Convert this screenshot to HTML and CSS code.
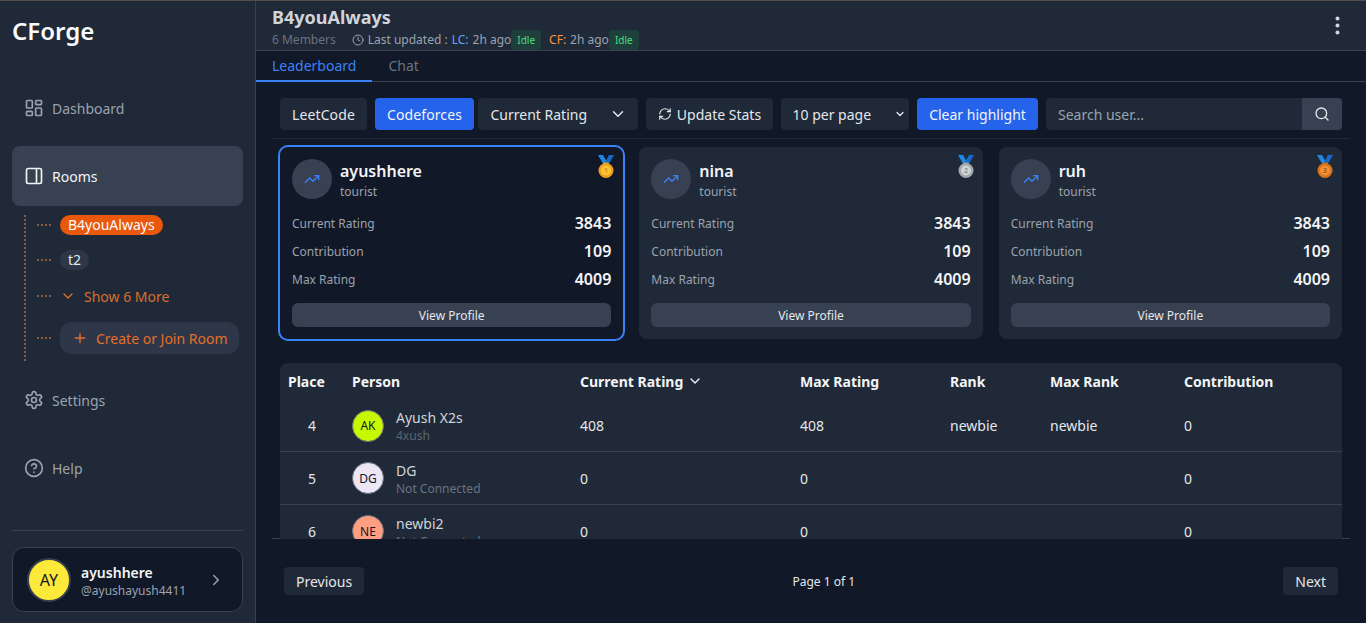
FILE: index.html
```html
<!DOCTYPE html>
<html lang="en">
<head>
<meta charset="utf-8">
<title>CForge</title>
<link rel="stylesheet" href="styles.css">
</head>
<body>
<div class="app">
  <aside class="sidebar">
    <h1 class="logo">CForge</h1>
    <nav class="nav">
      <a class="nav-item">
        <svg class="nav-icon" viewBox="0 0 24 24" fill="none" stroke="currentColor" stroke-width="2" stroke-linejoin="round"><rect x="3" y="3" width="7" height="9" rx="1"/><rect x="14" y="3" width="7" height="5" rx="1"/><rect x="14" y="12" width="7" height="9" rx="1"/><rect x="3" y="16" width="7" height="5" rx="1"/></svg>
        <span>Dashboard</span>
      </a>
      <a class="nav-item active">
        <svg class="nav-icon" viewBox="0 0 24 24" fill="none" stroke="currentColor" stroke-width="2" stroke-linejoin="round"><rect x="3" y="3" width="18" height="18" rx="2"/><path d="M15 3v18"/></svg>
        <span>Rooms</span>
      </a>
      <ul class="tree">
        <li class="tree-row"><i class="dash"></i><span class="pill pill-on">B4youAlways</span></li>
        <li class="tree-row"><i class="dash"></i><span class="pill">t2</span></li>
        <li class="tree-row"><i class="dash"></i><span class="more"><svg class="more-icon" viewBox="0 0 24 24" fill="none" stroke="currentColor" stroke-width="2" stroke-linecap="round" stroke-linejoin="round"><path d="m6 9 6 6 6-6"/></svg>Show 6 More</span></li>
        <li class="tree-row"><i class="dash"></i><span class="create"><svg class="create-icon" viewBox="0 0 24 24" fill="none" stroke="currentColor" stroke-width="2" stroke-linecap="round"><path d="M5 12h14M12 5v14"/></svg>Create or Join Room</span></li>
      </ul>
      <a class="nav-item">
        <svg class="nav-icon" viewBox="0 0 24 24" fill="none" stroke="currentColor" stroke-width="2" stroke-linecap="round" stroke-linejoin="round"><path d="M12.22 2h-.44a2 2 0 0 0-2 2v.18a2 2 0 0 1-1 1.73l-.43.25a2 2 0 0 1-2 0l-.15-.08a2 2 0 0 0-2.73.73l-.22.38a2 2 0 0 0 .73 2.73l.15.1a2 2 0 0 1 1 1.72v.51a2 2 0 0 1-1 1.74l-.15.09a2 2 0 0 0-.73 2.73l.22.38a2 2 0 0 0 2.73.73l.15-.08a2 2 0 0 1 2 0l.43.25a2 2 0 0 1 1 1.73V20a2 2 0 0 0 2 2h.44a2 2 0 0 0 2-2v-.18a2 2 0 0 1 1-1.73l.43-.25a2 2 0 0 1 2 0l.15.08a2 2 0 0 0 2.73-.73l.22-.39a2 2 0 0 0-.73-2.73l-.15-.08a2 2 0 0 1-1-1.74v-.5a2 2 0 0 1 1-1.74l.15-.09a2 2 0 0 0 .73-2.73l-.22-.38a2 2 0 0 0-2.73-.73l-.15.08a2 2 0 0 1-2 0l-.43-.25a2 2 0 0 1-1-1.73V4a2 2 0 0 0-2-2z"/><circle cx="12" cy="12" r="3"/></svg>
        <span>Settings</span>
      </a>
      <a class="nav-item">
        <svg class="nav-icon" viewBox="0 0 24 24" fill="none" stroke="currentColor" stroke-width="2" stroke-linecap="round" stroke-linejoin="round"><circle cx="12" cy="12" r="10"/><path d="M9.09 9a3 3 0 0 1 5.83 1c0 2-3 3-3 3"/><path d="M12 17h.01"/></svg>
        <span>Help</span>
      </a>
    </nav>
    <div class="side-foot">
      <div class="user-card">
        <span class="user-avatar">AY</span>
        <span class="user-text"><strong>ayushhere</strong><small>@ayushayush4411</small></span>
        <svg class="user-chev" viewBox="0 0 24 24" fill="none" stroke="currentColor" stroke-width="2" stroke-linecap="round" stroke-linejoin="round"><path d="m9 18 6-6-6-6"/></svg>
      </div>
    </div>
  </aside>

  <main class="main">
    <header class="room-head">
      <div class="room-info">
        <h2 class="room-title">B4youAlways</h2>
        <div class="room-meta">
          <span class="members">6 Members</span>
          <svg class="clock" viewBox="0 0 24 24" fill="none" stroke="currentColor" stroke-width="2" stroke-linecap="round" stroke-linejoin="round"><circle cx="12" cy="12" r="10"/><path d="M12 6v6l4 2"/></svg>
          <span>Last updated :</span>
          <span class="lc">LC:</span>
          <span>2h ago</span><span class="idle">Idle</span>
          <span class="cf">CF:</span>
          <span>2h ago</span><span class="idle">Idle</span>
        </div>
      </div>
      <svg class="kebab" viewBox="0 0 24 24" fill="currentColor"><circle cx="12" cy="4" r="2.3"/><circle cx="12" cy="12" r="2.3"/><circle cx="12" cy="20" r="2.3"/></svg>
    </header>

    <div class="tabs">
      <span class="tab tab-on">Leaderboard</span>
      <span class="tab">Chat</span>
    </div>

    <div class="panel">
      <div class="scroller">
        <div class="toolbar">
          <button class="btn btn-lc">LeetCode</button>
          <button class="btn btn-blue btn-cf">Codeforces</button>
          <span class="select sel-rating">Current Rating<svg class="sel-chev" viewBox="0 0 24 24" fill="none" stroke="currentColor" stroke-width="2" stroke-linecap="round" stroke-linejoin="round"><path d="m6 9 6 6 6-6"/></svg></span>
          <button class="btn btn-update"><svg class="refresh" viewBox="0 0 24 24" fill="none" stroke="currentColor" stroke-width="2" stroke-linecap="round" stroke-linejoin="round"><path d="M3 12a9 9 0 0 1 9-9 9.75 9.75 0 0 1 6.74 2.74L21 8"/><path d="M21 3v5h-5"/><path d="M21 12a9 9 0 0 1-9 9 9.75 9.75 0 0 1-6.74-2.74L3 16"/><path d="M8 16H3v5"/></svg>Update Stats</button>
          <span class="select sel-page">10 per page<svg class="sel-chev small" viewBox="0 0 24 24" fill="none" stroke="currentColor" stroke-width="2.6" stroke-linecap="round" stroke-linejoin="round"><path d="m6 9 6 6 6-6"/></svg></span>
          <button class="btn btn-blue btn-clear">Clear highlight</button>
          <div class="search">
            <span class="search-input">Search user...</span>
            <span class="search-btn"><svg viewBox="0 0 24 24" fill="none" stroke="currentColor" stroke-width="2" stroke-linecap="round" stroke-linejoin="round"><circle cx="11" cy="11" r="8"/><path d="m21 21-4.3-4.3"/></svg></span>
          </div>
        </div>

        <section class="cards">
          <article class="card card-on">
            <svg class="medal" viewBox="0 0 16 23"><path d="M0 0h5l5 9-4 1.500z" fill="#1e88e5"/><path d="M16 0h-5L6 9l4 1.500z" fill="#1669c7"/><rect x="5.500" y="7.500" width="5" height="2.500" fill="#e9a11a"/><circle cx="8" cy="15.500" r="7.500" fill="#f0a01c"/><circle cx="8" cy="15.500" r="5" fill="#fcc634"/><text class="medal-num num-gold" x="8" y="18">1</text></svg>
            <div class="card-head">
              <span class="trend"><svg viewBox="0 0 24 24" fill="none" stroke="currentColor" stroke-width="2" stroke-linecap="round" stroke-linejoin="round"><path d="m22 7-8.500 8.500-5-5L2 17"/><path d="M16 7h6v6"/></svg></span>
              <span class="card-name"><strong>ayushhere</strong><small>tourist</small></span>
            </div>
            <dl class="stats">
              <div class="stat"><dt>Current Rating</dt><dd>3843</dd></div>
              <div class="stat"><dt>Contribution</dt><dd>109</dd></div>
              <div class="stat"><dt>Max Rating</dt><dd>4009</dd></div>
            </dl>
            <button class="view">View Profile</button>
          </article>
          <article class="card">
            <svg class="medal" viewBox="0 0 16 23"><path d="M0 0h5l5 9-4 1.500z" fill="#1e88e5"/><path d="M16 0h-5L6 9l4 1.500z" fill="#1669c7"/><rect x="5.500" y="7.500" width="5" height="2.500" fill="#9aa0a6"/><circle cx="8" cy="15.500" r="7.500" fill="#a3a8ad"/><circle cx="8" cy="15.500" r="5" fill="#cfd3d6"/><text class="medal-num num-silver" x="8" y="18">2</text></svg>
            <div class="card-head">
              <span class="trend"><svg viewBox="0 0 24 24" fill="none" stroke="currentColor" stroke-width="2" stroke-linecap="round" stroke-linejoin="round"><path d="m22 7-8.500 8.500-5-5L2 17"/><path d="M16 7h6v6"/></svg></span>
              <span class="card-name"><strong>nina</strong><small>tourist</small></span>
            </div>
            <dl class="stats">
              <div class="stat"><dt>Current Rating</dt><dd>3843</dd></div>
              <div class="stat"><dt>Contribution</dt><dd>109</dd></div>
              <div class="stat"><dt>Max Rating</dt><dd>4009</dd></div>
            </dl>
            <button class="view">View Profile</button>
          </article>
          <article class="card">
            <svg class="medal" viewBox="0 0 16 23"><path d="M0 0h5l5 9-4 1.500z" fill="#1e88e5"/><path d="M16 0h-5L6 9l4 1.500z" fill="#1669c7"/><rect x="5.500" y="7.500" width="5" height="2.500" fill="#c46a1a"/><circle cx="8" cy="15.500" r="7.500" fill="#d9731c"/><circle cx="8" cy="15.500" r="5" fill="#f0913a"/><text class="medal-num num-bronze" x="8" y="18">3</text></svg>
            <div class="card-head">
              <span class="trend"><svg viewBox="0 0 24 24" fill="none" stroke="currentColor" stroke-width="2" stroke-linecap="round" stroke-linejoin="round"><path d="m22 7-8.500 8.500-5-5L2 17"/><path d="M16 7h6v6"/></svg></span>
              <span class="card-name"><strong>ruh</strong><small>tourist</small></span>
            </div>
            <dl class="stats">
              <div class="stat"><dt>Current Rating</dt><dd>3843</dd></div>
              <div class="stat"><dt>Contribution</dt><dd>109</dd></div>
              <div class="stat"><dt>Max Rating</dt><dd>4009</dd></div>
            </dl>
            <button class="view">View Profile</button>
          </article>
        </section>

        <table class="board">
          <colgroup><col class="c-place"><col class="c-person"><col class="c-cur"><col class="c-max"><col class="c-rank"><col class="c-maxrank"><col class="c-contrib"></colgroup>
          <thead>
            <tr><th>Place</th><th>Person</th><th>Current Rating<svg class="th-chev" viewBox="0 0 24 24" fill="none" stroke="currentColor" stroke-width="2" stroke-linecap="round" stroke-linejoin="round"><path d="m6 9 6 6 6-6"/></svg></th><th>Max Rating</th><th>Rank</th><th>Max Rank</th><th>Contribution</th></tr>
          </thead>
          <tbody>
            <tr>
              <td class="place">4</td>
              <td><div class="person"><span class="av av-ak">AK</span><span class="p-text"><b>Ayush X2s</b><small class="faint">4xush</small></span></div></td>
              <td>408</td><td>408</td><td>newbie</td><td>newbie</td><td>0</td>
            </tr>
            <tr>
              <td class="place">5</td>
              <td><div class="person"><span class="av av-dg">DG</span><span class="p-text"><b>DG</b><small>Not Connected</small></span></div></td>
              <td>0</td><td>0</td><td></td><td></td><td>0</td>
            </tr>
            <tr>
              <td class="place">6</td>
              <td><div class="person"><span class="av av-ne">NE</span><span class="p-text"><b>newbi2</b><small>Not Connected</small></span></div></td>
              <td>0</td><td>0</td><td></td><td></td><td>0</td>
            </tr>
          </tbody>
        </table>
      </div>

      <footer class="pager">
        <button class="pg-btn">Previous</button>
        <span class="pg-label">Page 1 of 1</span>
        <button class="pg-btn">Next</button>
      </footer>
    </div>
  </main>
</div>
</body>
</html>
```

FILE: styles.css
```css
* { box-sizing: border-box; }
html, body { margin: 0; height: 100%; overflow: hidden; }
body {
  font-family: "Noto Sans", sans-serif;
  background: #111827;
  color: #f3f4f6;
  border-top: 1px solid #524e4a;
}
button { font: inherit; border: 0; }
h1, h2, ul, dl, dd { margin: 0; padding: 0; }
ul { list-style: none; }

.app { display: flex; height: 622px; }

/* Sidebar */
.sidebar {
  width: 256px;
  flex: none;
  background: #1f2937;
  border-right: 1px solid #374151;
  padding: 0 12px;
  display: flex;
  flex-direction: column;
}
.logo { font-size: 24px; line-height: 32px; font-weight: 600; color: #f9fafb; margin-top: 14px; }
.nav { margin-top: 31px; display: flex; flex-direction: column; flex: 1; }
.nav-item {
  height: 60px;
  display: flex;
  align-items: center;
  gap: 8px;
  padding-left: 12px;
  border-radius: 8px;
  font-size: 14px;
  color: #9ca3af;
  margin-bottom: 8px;
}
.nav-icon { width: 20px; height: 20px; flex: none; }
.nav-item.active { background: #374151; color: #f3f4f6; margin-bottom: 0; }
.tree {
  margin: 9px 0 9px 12px;
  border-left: 2px dotted #8a5a3c;
  height: 146px;
  width: 215px;
}
.tree-row { display: flex; align-items: center; gap: 9px; }
.tree-row:nth-child(1) { height: 20px; }
.tree-row:nth-child(2) { height: 20px; margin-top: 15px; }
.tree-row:nth-child(3) { height: 20px; margin-top: 16px; }
.tree-row:nth-child(4) { height: 32px; margin-top: 16px; }
.dash { width: 14px; margin-left: 11px; border-top: 2px dotted #8a5a3c; flex: none; }
.pill {
  height: 20px; line-height: 20px; padding: 0 8px; border-radius: 10px;
  font-size: 14px; background: #2d3748; color: #e5e7eb;
}
.pill-on { background: #ea580c; color: #f9fafb; }
.more { display: flex; align-items: center; font-size: 14px; color: #d96f2c; }
.more-icon { width: 16px; height: 16px; margin: 0 8px 0 0; }
.create {
  height: 32px; display: flex; align-items: center; padding: 0 11px 0 12px;
  border-radius: 12px; background: #2d3748; color: #e56e28; font-size: 14px; white-space: nowrap;
}
.create-icon { width: 16px; height: 16px; margin-right: 8px; }

.side-foot { border-top: 1px solid #374151; padding-top: 16px; margin-bottom: 11px; }
.user-card {
  height: 65px; display: flex; align-items: center;
  background: #111827; border: 1px solid #374151; border-radius: 12px;
  padding: 0 14px;
}
.user-avatar {
  width: 44px; height: 44px; border-radius: 50%; flex: none;
  background: #fde93a; border: 2px solid #374151; color: #111827;
  display: flex; align-items: center; justify-content: center; font-size: 16px;
}
.user-text { display: flex; flex-direction: column; margin-left: 10px; flex: 1; padding-top: 4px; }
.user-text strong { font-size: 14px; line-height: 18px; font-weight: 600; color: #f3f4f6; }
.user-text small { font-size: 12px; line-height: 17px; color: #9ca3af; }
.user-chev { width: 18px; height: 18px; color: #9ca3af; margin-right: 3px; }

/* Main */
.main { flex: 1; min-width: 0; display: flex; flex-direction: column; }
.room-head {
  height: 50px; flex: none;
  background: #1f2937; border-bottom: 1px solid #374151;
  padding: 0 16px;
  display: flex; align-items: center; justify-content: space-between;
}
.room-title { font-size: 18px; line-height: 22px; font-weight: 700; color: #d1d5db; margin-top: 4px; }
.room-info { display: flex; flex-direction: column; }
.room-meta { display: flex; align-items: center; font-size: 12px; line-height: 20px; color: #9ca3af; height: 20px; margin-top: 2px; }
.members { color: #6b7280; margin-right: 16px; }
.clock { width: 12px; height: 12px; margin-right: 4px; }
.lc { color: #60a5fa; margin: 0 4px; }
.cf { color: #fb923c; margin: 0 4px 0 8px; }
.idle {
  height: 20px; padding: 0 6px; border-radius: 4px; font-size: 10px; line-height: 20px;
  background: rgba(34, 197, 94, .15); color: #4ade80;
}
.kebab { width: 21px; height: 21px; color: #d1d5db; margin-right: 2px; }

.tabs {
  height: 31px; flex: none; display: flex;
  border-bottom: 1px solid #374151; font-size: 14px;
}
.tab { padding: 0 16px; line-height: 29px; color: #6b7280; height: 31px; }
.tab-on { color: #3b82f6; border-bottom: 2px solid #3b82f6; }

.panel { flex: 1; min-height: 0; padding: 0 16px; display: flex; flex-direction: column; }
.scroller {
  height: 457px; flex: none; overflow: hidden;
  box-shadow: inset 0 -1px 0 #374151;
  padding-top: 16px;
}
.toolbar {
  display: flex; gap: 8px; height: 41px; padding: 0 8px 9px;
  margin-bottom: 8px; border-bottom: 1px solid #1f2937; font-size: 14px;
}
.btn, .select {
  height: 32px; border-radius: 4px; background: #1f2937; color: #e5e7eb;
  display: flex; align-items: center; font-size: 14px; white-space: nowrap;
}
.btn { padding: 0 12px; justify-content: center; }
.btn-lc { width: 87px; padding: 0; letter-spacing: .1px; }
.btn-cf { width: 99px; padding: 0; letter-spacing: .1px; }
.btn-blue { background: #2563eb; color: #f3f4f6; }
.select { padding: 0 12px 0 12.5px; justify-content: space-between; }
.sel-rating { width: 160px; margin-left: -4px; }
.sel-page { width: 128px; padding: 0 3px 0 11.5px; }
.sel-chev { width: 18px; height: 18px; }
.sel-rating .sel-chev { margin-right: -1px; }
.sel-chev.small { width: 12px; height: 12px; margin-right: 0; }
.refresh { width: 14px; height: 14px; margin-right: 5px; }
.btn-update { width: 127px; padding: 0; }
.btn-clear { width: 121px; padding: 0; }
.search { flex: 1; display: flex; }
.search-input {
  flex: 1; height: 32px; line-height: 34px; padding-left: 12px; background: #1f2937;
  border-radius: 4px 0 0 4px; color: #9ca3af; font-size: 14px;
}
.search-btn {
  width: 40px; height: 32px; background: #374151; color: #e5e7eb;
  border-radius: 0 4px 4px 0; display: flex; align-items: center; justify-content: center;
}
.search-btn svg { width: 16px; height: 16px; }

.cards { display: grid; grid-template-columns: repeat(3, 1fr); gap: 16px; padding: 0 8px; }
.card {
  position: relative; height: 192px; background: #1f2937; border-radius: 8px; padding: 12px;
  display: flex; flex-direction: column;
}
.card-on { background: #111827; outline: 2px solid #3b82f6; outline-offset: 0; }
.medal { position: absolute; top: 8px; right: 9px; width: 16px; height: 23px; }
.medal-num { font-size: 7px; font-weight: 700; text-anchor: middle; }
.num-gold { fill: #d98a10; }
.num-silver { fill: #8c9196; }
.num-bronze { fill: #b5560f; }
.card-head { display: flex; align-items: center; gap: 8px; height: 40px; }
.trend {
  width: 40px; height: 40px; border-radius: 50%; background: #374151; color: #3b82f6;
  display: flex; align-items: center; justify-content: center; flex: none;
}
.trend svg { width: 16px; height: 16px; }
.card-name { display: flex; flex-direction: column; }
.card-name strong { font-size: 16px; line-height: 24px; font-weight: 600; color: #f3f4f6; }
.card-name small { font-size: 12px; line-height: 16px; color: #9ca3af; padding-top: 1px; margin-bottom: -1px; }
.stats { margin-top: 10px; }
.stat { height: 28px; display: flex; align-items: center; justify-content: space-between; }
.stat dt { font-size: 12px; color: #9ca3af; }
.stat dd { font-size: 16px; font-weight: 600; color: #f3f4f6; }
.view {
  margin-top: 10px; height: 24px; background: #374151; color: #e5e7eb; border-radius: 6px; font-size: 12px;
}

.board {
  width: calc(100% - 16px); margin: 24px 8px 0; table-layout: fixed; border-collapse: separate; border-spacing: 0;
  background: #1f2937; border-radius: 8px 8px 0 0; font-size: 14px;
}
.c-place { width: 64px; } .c-person { width: 228px; } .c-cur { width: 220px; }
.c-max { width: 150px; } .c-rank { width: 100px; } .c-maxrank { width: 134px; } .c-contrib { width: 166px; }
.board th { height: 37px; padding: 0 8px; text-align: left; font-weight: 700; color: #f3f4f6; white-space: nowrap; }
.th-chev { width: 16px; height: 16px; margin-left: 4px; vertical-align: -2px; }
.board td { height: 53px; padding: 0 8px; color: #e5e7eb; border-top: 1px solid #374151; }
.board tbody tr:first-child td { border-top: 0; height: 51px; }
.board td.place { text-align: center; }
.person { display: flex; align-items: center; gap: 12px; }
.av {
  width: 32px; height: 32px; border-radius: 50%; flex: none; border: 1px solid #6b7280;
  display: flex; align-items: center; justify-content: center; font-size: 12px; color: #111827;
}
.av-ak { background: #c6f800; }
.av-dg { background: #ece6f5; }
.av-ne { background: #ff9e80; }
.p-text { display: flex; flex-direction: column; }
.board tbody tr + tr .p-text { margin-top: 2px; }
.p-text b { font-weight: 400; font-size: 14px; line-height: 20px; color: #d1d5db; }
.p-text small { font-size: 12px; line-height: 16px; color: #6b7280; }
.p-text small.faint { color: #5b6472; }

.pager { flex: 1; display: flex; align-items: center; justify-content: space-between; padding: 0 12px; }
.pg-btn { height: 28px; padding: 0 12px; border-radius: 4px; background: #1f2937; color: #e5e7eb; font-size: 14px; }
.pg-label { font-size: 12px; color: #e5e7eb; }
```
